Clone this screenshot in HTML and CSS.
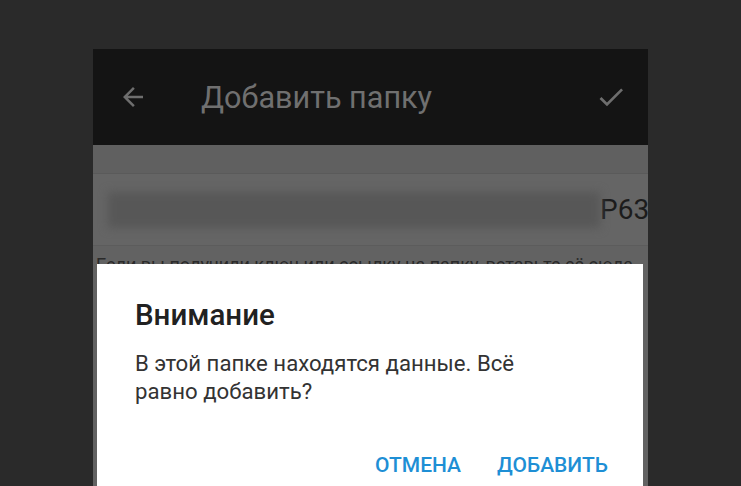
FILE: index.html
```html
<!DOCTYPE html>
<html lang="ru">
<head>
    <meta charset="utf-8">
    <title>Добавить папку</title>
    <link rel="stylesheet" href="styles.css">
</head>
<body>
    <div class="screen">
        <div class="appbar">
            <span class="ic back">
                <svg width="30" height="30" viewBox="0 0 24 24"><path d="M20 11H7.83l5.59-5.59L12 4l-8 8 8 8 1.41-1.41L7.83 13H20v-2z" fill="#6e6e6e"/></svg>
            </span>
            <h2>Добавить папку</h2>
            <span class="ic ok">
                <svg width="32" height="32" viewBox="0 0 24 24"><path d="M9 16.17L4.83 12l-1.42 1.41L9 19 21 7l-1.41-1.41z" fill="#6e6e6e"/></svg>
            </span>
        </div>
        <div class="content">
            <div class="gap"></div>
            <div class="field">
                <div class="blur"></div>
                <span class="id">P63</span>
            </div>
            <p class="hint">Если вы получили ключ или ссылку на папку, вставьте её сюда</p>
        </div>
        <div class="dialog">
            <h3>Внимание</h3>
            <p>В этой папке находятся данные. Всё равно добавить?</p>
            <div class="btns">
                <a href="#">Отмена</a>
                <a href="#">Добавить</a>
            </div>
        </div>
    </div>
</body>
</html>
```

FILE: styles.css
```css
html, body { margin: 0; height: 100%; }
body { background: #2a2a2a; font-family: Roboto, "Noto Sans", sans-serif; overflow: hidden; }
.screen { position: relative; margin: 49px 0 0 93px; width: 555px; height: 437px; background: #626262; overflow: hidden; }
.appbar { height: 96px; background: #141414; display: flex; align-items: center; }
.appbar h2 { margin: 0 0 0 53px; font-size: 30.6px; font-weight: 400; color: #707070; flex: 1; }
.ic { display: flex; }
.back { margin-left: 25px; }
.ok { margin-right: 21px; }
.gap { height: 28px; background: #606060; border-bottom: 1px solid #5a5a5a; }
.field { height: 71px; background: #656565; border-bottom: 1px solid #5c5c5c; display: flex; align-items: center; padding-left: 15px; overflow: hidden; }
.blur { width: 492px; height: 36px; background: #575757; filter: blur(5px); flex: none; }
.id { font-size: 28px; color: #1c1c1c; white-space: nowrap; }
.hint { margin: 8px 0 0 3px; font-size: 18px; color: #2a2a2a; white-space: nowrap; }
.dialog { position: absolute; left: 4px; top: 215px; width: 546px; height: 240px; background: #fff; box-sizing: border-box; padding: 34px 38px 0 38px; }
.dialog h3 { margin: 0; font-size: 29.5px; font-weight: 500; color: #212121; line-height: 34px; }
.dialog p { margin: 17px 90px 0 0; font-size: 22.2px; line-height: 28px; color: #333; }
.btns { display: flex; justify-content: flex-end; gap: 36px; margin-top: 48px; margin-right: -3px; }
.btns a { font-size: 21px; font-weight: 500; color: #1e8fd5; text-decoration: none; text-transform: uppercase; }
```
